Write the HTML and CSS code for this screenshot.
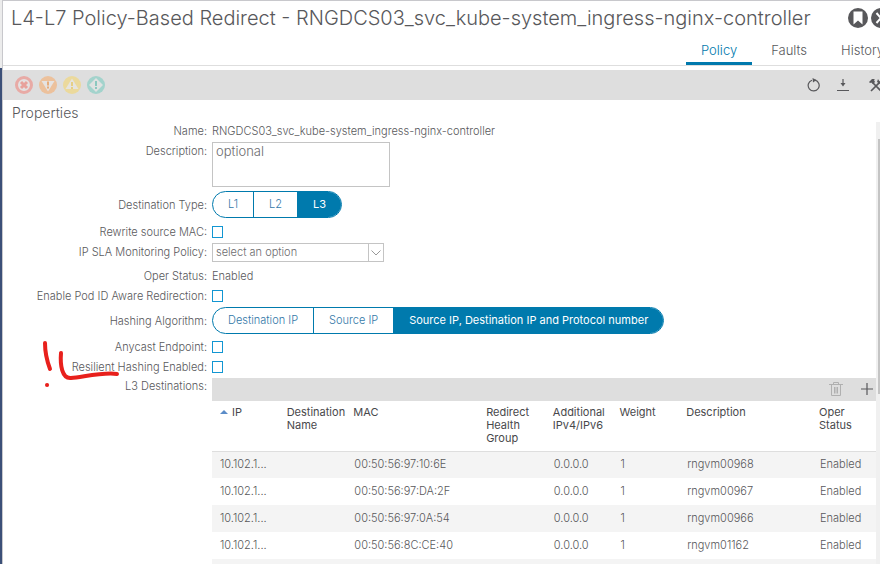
FILE: index.html
```html
<!DOCTYPE html>
<html lang="en">
<head>
<meta charset="utf-8">
<title>L4-L7 Policy-Based Redirect</title>
<link rel="stylesheet" href="styles.css">
</head>
<body>
<aside class="rail"><span class="rail-top"></span></aside>
<main class="panel">
  <header class="head">
    <div class="title-row">
      <h1>L4-L7 Policy-Based Redirect - RNGDCS03_svc_kube-system_ingress-nginx-controller</h1>
      <div class="head-actions">
        <button class="round" aria-label="Bookmark"><svg width="20" height="20" viewBox="0 0 20 20"><circle cx="10" cy="10" r="10" fill="#58585b"/><path d="M5.500 3.500h9v13L10 12.500l-4.500 4z" fill="#fff"/></svg></button>
        <button class="round" aria-label="Close"><svg width="20" height="20" viewBox="0 0 20 20"><circle cx="10" cy="10" r="10" fill="#58585b"/><path d="M5.500 5l9 10M14.500 5l-9 10" stroke="#fff" stroke-width="2" fill="none"/></svg></button>
      </div>
    </div>
    <nav class="tabs">
      <a class="active" href="#policy">Policy</a>
      <a href="#faults">Faults</a>
      <a href="#history">History</a>
    </nav>
  </header>
  <div class="toolbar">
    <div class="faults">
      <svg width="18" height="18" viewBox="0 0 18 18"><circle cx="9" cy="9" r="7.500" fill="#e4e1e1" stroke="#e8aaa5" stroke-width="3"/><path d="M6 6l6 6M12 6l-6 6" stroke="#e8a19b" stroke-width="3"/></svg>
      <svg width="18" height="18" viewBox="0 0 18 18"><circle cx="9" cy="9" r="9" fill="#ecc19c"/><path d="M2.500 5h13L9 15.500z" fill="#e6e3e1"/><path d="M9 5.500v4M9 10.500v2" stroke="#e6ac7a" stroke-width="2"/></svg>
      <svg width="18" height="18" viewBox="0 0 18 18"><circle cx="9" cy="9" r="9" fill="#ebd99c"/><path d="M2.500 13h13L9 2.500z" fill="#e6e4de"/><path d="M9 6v4M9 11v2" stroke="#e6cf84" stroke-width="2"/></svg>
      <svg width="18" height="18" viewBox="0 0 18 18"><circle cx="9" cy="9" r="9" fill="#a3d3cc"/><path d="M9 2l7 7-7 7-7-7z" fill="#e0e2e1"/><path d="M9 5v5M9 11v2" stroke="#8cc8bf" stroke-width="2"/></svg>
    </div>
    <div class="tools">
      <button aria-label="Refresh"><svg width="14" height="14" viewBox="0 0 14 14"><path d="M8 2.100A5.500 5.500 0 1 1 5 2.200" fill="none" stroke="#58585b" stroke-width="1.200"/><path d="M5.500 0l4 2-3.500 2.500z" fill="#58585b"/></svg></button>
      <button aria-label="Download"><svg width="14" height="14" viewBox="0 0 14 14"><path d="M7 1v6M1 12.500h12" stroke="#58585b" stroke-width="1.200"/><path d="M4.500 5h5L7 8.500z" fill="#58585b"/></svg></button>
      <button class="last" aria-label="Actions"><svg width="14" height="14" viewBox="0 0 14 14"><path d="M3 4l9 9M12 3L2 13" stroke="#58585b" stroke-width="1.600"/><path d="M0 4l3-3 3 0-1 1 1 2-2 2-1.500-1.500L1 5zM9 1l1.500 2.500L13 5l-2 1-3-2z" fill="#58585b"/></svg></button>
    </div>
  </div>
  <section class="content">
    <h2>Properties</h2>
    <form class="form">
      <div class="row"><span class="label">Name:</span><span>RNGDCS03_svc_kube-system_ingress-nginx-controller</span></div>
      <div class="row tall"><label class="label" for="desc">Description:</label><textarea id="desc" placeholder="optional"></textarea></div>
      <div class="row first-pills"><span class="label">Destination Type:</span><div class="pills"><button type="button">L1</button><button type="button">L2</button><button type="button" class="on">L3</button></div></div>
      <div class="row"><label class="label" for="mac">Rewrite source MAC:</label><input type="checkbox" id="mac"></div>
      <div class="row select-row"><label class="label" for="sla">IP SLA Monitoring Policy:</label><div class="select"><select id="sla"><option>select an option</option></select><span class="arrow"><svg width="10" height="6" viewBox="0 0 10 6"><path d="M.5.500L5 5 9.500.500" fill="none" stroke="#999"/></svg></span></div></div>
      <div class="row"><span class="label">Oper Status:</span><span>Enabled</span></div>
      <div class="row"><label class="label" for="pod">Enable Pod ID Aware Redirection:</label><input type="checkbox" id="pod"></div>
      <div class="row pills-row"><span class="label">Hashing Algorithm:</span><div class="pills"><button type="button">Destination IP</button><button type="button">Source IP</button><button type="button" class="on">Source IP, Destination IP and Protocol number</button></div></div>
      <div class="row"><label class="label" for="any">Anycast Endpoint:</label><input type="checkbox" id="any"></div>
      <div class="row"><label class="label" for="res">Resilient Hashing Enabled:</label><input type="checkbox" id="res">
        <svg class="marks" width="80" height="48" viewBox="0 0 80 48" fill="none" stroke="#e8201c" stroke-width="4" stroke-linecap="round" stroke-linejoin="round"><path d="M5 2c0 9 2 18 5 26M21 12c-1 12 1 26 10 25 12-1 32-6 46-4"/><path d="M7 44h.1"/></svg>
      </div>
      <div class="row dest"><span class="label">L3 Destinations:</span>
        <div class="grid">
          <div class="grid-bar">
            <button type="button" aria-label="Delete"><svg width="14" height="14" viewBox="0 0 14 14"><path d="M0 2.500h14M4.500 2V.500h5V2M2.500 3v10.500h9V3M5.500 5v6.500M7 5v6.500M8.500 5v6.500" fill="none" stroke="#b0b0b0"/></svg></button>
            <button type="button" aria-label="Add"><svg width="12" height="12" viewBox="0 0 12 12"><path d="M6 0v12M0 6h12" stroke="#58585b" stroke-width="1.200"/></svg></button>
          </div>
          <table>
            <thead><tr><th><span class="sort"></span>IP</th><th>Destination Name</th><th class="mac">MAC</th><th>Redirect Health Group</th><th>Additional IPv4/IPv6</th><th>Weight</th><th class="mac">Description</th><th class="end">Oper Status</th></tr></thead>
            <tbody>
              <tr><td>10.102.1...</td><td></td><td>00:50:56:97:10:6E</td><td></td><td>0.0.0.0</td><td>1</td><td>rngvm00968</td><td>Enabled</td></tr>
              <tr><td>10.102.1...</td><td></td><td>00:50:56:97:DA:2F</td><td></td><td>0.0.0.0</td><td>1</td><td>rngvm00967</td><td>Enabled</td></tr>
              <tr><td>10.102.1...</td><td></td><td>00:50:56:97:0A:54</td><td></td><td>0.0.0.0</td><td>1</td><td>rngvm00966</td><td>Enabled</td></tr>
              <tr><td>10.102.1...</td><td></td><td>00:50:56:8C:CE:40</td><td></td><td>0.0.0.0</td><td>1</td><td>rngvm01162</td><td>Enabled</td></tr>
              <tr><td></td><td></td><td></td><td></td><td></td><td></td><td></td><td></td></tr>
            </tbody>
          </table>
        </div>
      </div>
    </form>
    <div class="scroll"><span></span></div>
  </section>
</main>
</body>
</html>
```
FILE: styles.css
```css
* { box-sizing: border-box; }
html { height: 100%; }
body {
  margin: 0;
  height: 100%;
  display: flex;
  overflow: hidden;
  font: 300 11px/13px Inter, "Liberation Sans", sans-serif;
  color: #58585b;
  background: #fff;
}
button {
  font: inherit;
  color: inherit;
  background: none;
  border: 0;
  padding: 0;
}
svg { display: block; flex: none; }

.rail { flex: none; width: 2px; background: #3c5078; }
.rail-top { display: block; height: 68px; background: #ececec; }
.panel {
  flex: 1;
  min-width: 0;
  display: flex;
  flex-direction: column;
  border-left: 1px solid #c8c8cc;
  border-top: 1px solid #c8c8cc;
}

.head { border-bottom: 1px solid #dedede; }
.title-row { display: flex; height: 33px; align-items: center; padding-left: 8px; }
h1 { margin: 0; flex: 1; font-size: 20px; line-height: 32px; font-weight: 300; white-space: nowrap; }
.head-actions { display: flex; gap: 3px; margin-right: -11px; }
.tabs { display: flex; justify-content: flex-end; height: 31px; margin-right: -19px; }
.tabs a {
  padding: 7px 15px 0;
  margin-left: 4px;
  font-size: 13px;
  line-height: 18px;
  font-weight: 300;
  color: inherit;
  text-decoration: none;
  border-bottom: 3px solid transparent;
}
.tabs .active { color: #0079ad; border-color: #0079ad; }

.toolbar {
  flex: none;
  display: flex;
  align-items: center;
  justify-content: space-between;
  height: 30px;
  margin-top: 4px;
  padding-left: 12px;
  background: #dedede;
}
.faults { display: flex; gap: 6px; }
.tools { display: flex; gap: 15px; margin-right: -3px; }
.tools .last { margin-left: 4px; }

.content { flex: 1; position: relative; min-height: 0; overflow: hidden; }
h2 { margin: 0; padding: 4px 9px 0; font-size: 14px; line-height: 18px; font-weight: 300; }
.form { display: flex; flex-direction: column; gap: 1px; margin-right: 4px; }
.row { display: flex; align-items: center; gap: 5px; height: 19px; position: relative; }
.label { flex: none; width: 204px; text-align: right; }
.tall { height: 45px; align-items: flex-start; margin-bottom: 3px; }
.tall .label { padding-top: 3px; }
textarea {
  width: 178px;
  height: 45px;
  padding: 0 3px;
  border: 1px solid #c4c4c4;
  resize: none;
  font: 300 13px/16px Inter, sans-serif;
}
::placeholder { color: #6b6b6e; }
.first-pills { height: 27px; margin-bottom: 4px; }
.pills-row { height: 27px; margin-bottom: 3px; }
.first-pills .label, .pills-row .label { padding-top: 2px; }
.pills {
  display: flex;
  height: 27px;
  border: 1px solid #007aad;
  border-radius: 14px;
  overflow: hidden;
  color: #3278a8;
}
.pills button { padding: 0 15px; }
.pills button + button { border-left: 1px solid #007aad; }
.pills .on { background: #007aad; color: #fff; font-weight: 400; }
input[type="checkbox"] {
  appearance: none;
  width: 11px;
  height: 12px;
  margin: 0 0 2px;
  border: 1px solid #1296d2;
}
.select-row { margin-bottom: 4px; }
.select { display: flex; width: 172px; height: 19px; border: 1px solid #c4c4c4; }
select {
  flex: 1;
  appearance: none;
  padding: 0 3px;
  border: 0;
  background: none;
  font: inherit;
  color: #6b6b6e;
}
.arrow { display: flex; align-items: center; justify-content: center; width: 15px; border-left: 1px solid #c4c4c4; }
.marks { position: absolute; left: 37px; top: -17px; }

.dest { height: auto; align-items: flex-start; }
.dest .label { padding-top: 2px; }
.grid { flex: 1; min-width: 0; }
.grid-bar { display: flex; align-items: center; justify-content: flex-end; gap: 18px; height: 23px; padding: 0 3px 2px 0; background: #dedede; }
table { width: 100%; table-layout: fixed; border-collapse: collapse; }
th { height: 50px; padding: 5px 0 0 8px; text-align: left; vertical-align: top; font-weight: 400; color: #48484b; border-bottom: 1px solid #dedede; }
th.mac { width: 20%; }
th.end { width: 65px; }
td { height: 27px; padding: 0 0 0 8px; white-space: nowrap; }
td + td { padding-left: 9px; }
tbody tr:nth-child(odd) { background: #f4f4f4; }
.sort { display: inline-block; margin-right: 4px; border: 4px solid transparent; border-top: 0; border-bottom-color: #5b8cc8; vertical-align: 2px; }
.scroll { position: absolute; top: 22px; right: 0; bottom: 0; width: 4px; background: #f0f0f0; }
.scroll span { display: block; width: 2px; height: 255px; margin: 17px 0 0 2px; background: #c4c4c4; }
```
